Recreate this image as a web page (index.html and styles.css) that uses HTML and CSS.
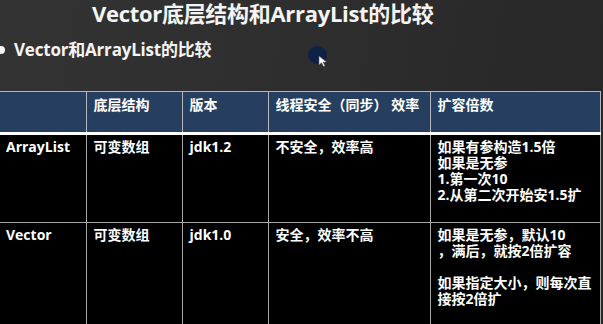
FILE: index.html
```html
<!DOCTYPE html>
<html lang="zh">
<head>
<meta charset="utf-8">
<link rel="stylesheet" href="styles.css">
</head>
<body>
<div class="slide">
  <h1 class="title">Vector底层结构和ArrayList的比较</h1>
  <div class="subtitle"><span class="bullet"></span><span>Vector和ArrayList的比较</span></div>
  <div class="pointer">
    <svg width="10" height="12" viewBox="0 0 10 12"><path d="M1 1 L1 10 L3.5 7.8 L5.5 11.5 L7 10.8 L5.2 7.2 L8.5 7 Z" fill="#fff" stroke="#555" stroke-width="0.6"/></svg>
  </div>
  <table class="cmp">
    <colgroup>
      <col class="c1"><col class="c2"><col class="c3"><col class="c4"><col class="c5">
    </colgroup>
    <thead>
      <tr><th></th><th>底层结构</th><th>版本</th><th>线程安全（同步） 效率</th><th>扩容倍数</th></tr>
    </thead>
    <tbody>
      <tr class="r1">
        <td>ArrayList</td><td>可变数组</td><td>jdk1.2</td><td>不安全，效率高</td>
        <td>如果有参构造1.5倍<br>如果是无参<br>1.第一次10<br>2.从第二次开始安1.5扩</td>
      </tr>
      <tr class="r2">
        <td>Vector</td><td>可变数组</td><td>jdk1.0</td><td>安全，效率不高</td>
        <td>如果是无参，默认10<br>，满后，就按2倍扩容<br><br>如果指定大小，则每次直接按2倍扩</td>
      </tr>
    </tbody>
  </table>
</div>
</body>
</html>
```

FILE: styles.css
```css
* { box-sizing: border-box; }
html, body { margin: 0; padding: 0; }
body {
  width: 603px;
  height: 324px;
  overflow: hidden;
  background: #2c2c2c;
  font-family: "Open Sans", "Noto Sans CJK SC", sans-serif;
  color: #fff;
}
.slide {
  position: relative;
  width: 603px;
  height: 324px;
  padding-top: 1px;
  background: linear-gradient(100deg, #333333 0%, #2e2e2e 45%, #2a2a2a 75%, #262626 100%);
}
.title {
  margin: 0;
  padding: 0 0 0 92px;
  font-size: 22px;
  line-height: 24px;
  font-weight: 700;
  color: #f4f4f4;
  letter-spacing: -0.3px;
}
.subtitle {
  display: flex;
  align-items: center;
  gap: 9px;
  margin-top: 13px;
  margin-left: -3px;
  font-size: 17px;
  line-height: 24px;
  font-weight: 700;
  color: #f4f4f4;
  letter-spacing: -0.2px;
}
.bullet {
  width: 8px;
  height: 8px;
  border-radius: 50%;
  background: #f4f4f4;
}
.pointer {
  position: absolute;
  left: 308px;
  top: 46px;
  width: 19px;
  height: 18px;
  border-radius: 50%;
  background: #0f2147;
}
.pointer svg {
  position: absolute;
  left: 10px;
  top: 9px;
}
.cmp {
  margin-top: 29px;
  width: 600px;
  border-collapse: collapse;
  table-layout: fixed;
  font-size: 14px;
  line-height: 16px;
  font-weight: 700;
}
.c1 { width: 86px; }
.c2 { width: 96px; }
.c3 { width: 86px; }
.c4 { width: 162px; }
.c5 { width: 170px; }
.cmp th {
  background: #263f60;
  height: 42px;
  text-align: left;
  vertical-align: top;
  padding: 5px 7px;
  border: 1px solid #b4b8bd;
  border-bottom: 3px solid #ffffff;
  font-weight: 700;
}
.cmp th:first-child { border-left: none; }
.cmp td {
  background: #000;
  vertical-align: top;
  padding: 4px 7px;
  border: 1px solid #a8a8a8;
}
.cmp td:first-child { border-left: none; padding-left: 6px; }
.cmp .r1 td { height: 89px; }
.cmp .r2 td { height: 104px; }
```
